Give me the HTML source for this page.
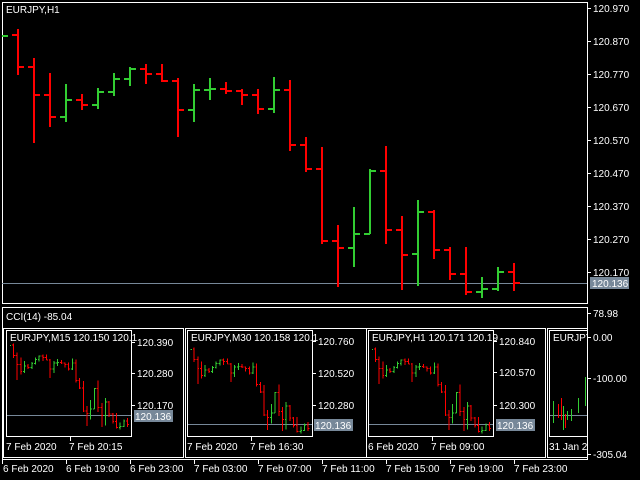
<!DOCTYPE html>
<html><head><meta charset="utf-8"><style>
html,body{margin:0;padding:0;background:#000;width:640px;height:480px;overflow:hidden}
svg{display:block}
text{font-family:"Liberation Sans",sans-serif;font-size:10px;fill:#fff}
</style></head><body>
<svg width="640" height="480" viewBox="0 0 640 480" shape-rendering="crispEdges">
<defs>
<g id="bars" fill="none">
<path stroke="#ff0000" vector-effect="non-scaling-stroke" d="M18 29V75M12 35H18M18 67H24M34 58V143M28 67H34M34 95H40M50 73V127M44 95H50M50 117H56M82 94V110M76 100H82M82 105H88M146 64V84M140 69H146M146 74H152M162 64V82M156 74H162M162 81H168M178 78V137M172 81H178M178 110H184M226 82V94M220 89H226M226 91H232M242 89V105M236 91H242M242 95H248M258 89V114M252 95H258M258 109H264M290 80V151M284 90H290M290 145H296M306 137V172M300 145H306M306 169H312M322 147V244M316 169H322M322 241H328M338 225V287M332 241H338M338 248H344M386 146V244M380 171H386M386 230H392M402 216V290M396 230H402M402 255H408M434 210V259M428 212H434M434 250H440M450 247V280M444 250H450M450 274H456M466 247V295M460 274H466M466 292H472M514 263V291M508 272H514M514 283H520"/>
<path stroke="#32cd32" vector-effect="non-scaling-stroke" d="M2 36H8M66 84V122M60 117H66M66 100H72M98 88V109M92 105H98M98 92H104M114 73V96M108 92H114M114 79H120M130 67V86M124 79H130M130 69H136M194 84V122M188 110H194M194 90H200M210 78V100M204 90H210M210 89H216M274 77V113M268 109H274M274 90H280M354 207V267M348 248H354M354 234H360M370 169V234M364 234H370M370 171H376M418 200V286M412 254H418M418 212H424M482 277V298M476 292H482M482 289H488M498 267V291M492 289H498M498 272H504"/>
</g>
<clipPath id="c1"><rect x="7" y="331" width="124" height="105"/></clipPath>
<clipPath id="c2"><rect x="188" y="331" width="123" height="105"/></clipPath>
<clipPath id="c3"><rect x="369" y="331" width="123" height="105"/></clipPath>
<clipPath id="c4"><rect x="550" y="331" width="37" height="105"/></clipPath>
</defs>

<!-- main chart -->
<rect x="2.5" y="2.5" width="585" height="301" fill="none" stroke="#fff"/>
<line x1="2" y1="283.5" x2="587" y2="283.5" stroke="#778899"/>
<g stroke-width="2"><use href="#bars"/></g>
<text x="6" y="13">EURJPY,H1</text>
<g stroke="#fff">
<path d="M587 8.5H591M587 41.5H591M587 74.5H591M587 107.5H591M587 140.5H591M587 173.5H591M587 206.5H591M587 239.5H591M587 272.5H591"/>
</g>
<g>
<text x="593" y="12">120.970</text><text x="593" y="45">120.870</text><text x="593" y="78">120.770</text><text x="593" y="111">120.670</text><text x="593" y="144">120.570</text><text x="593" y="177">120.470</text><text x="593" y="210">120.370</text><text x="593" y="243">120.270</text><text x="593" y="276">120.170</text>
</g>
<rect x="590" y="277" width="39" height="12" fill="#778899"/>
<text x="592" y="287">120.136</text>

<!-- indicator window -->
<rect x="2.5" y="307.5" width="585" height="152" fill="none" stroke="#fff"/>
<text x="6" y="320">CCI(14) -85.04</text>

<!-- mini 1 -->
<rect x="3.5" y="328.5" width="180" height="129" fill="none" stroke="#fff"/>
<rect x="6.5" y="330.5" width="125" height="106" fill="none" stroke="#fff"/>
<line x1="7" y1="415.5" x2="131" y2="415.5" stroke="#778899"/>
<g clip-path="url(#c1)" stroke-width="1"><use href="#bars" transform="translate(9.3 334) scale(0.23 0.32)"/></g>
<text x="10" y="341">EURJPY,M15  120.150 120.1</text>
<path stroke="#fff" d="M131 342.5H135M131 373.5H135M131 405.5H135M70.5 437V441"/>
<text x="137" y="346">120.390</text><text x="137" y="377">120.280</text><text x="137" y="409">120.170</text>
<rect x="134" y="410" width="39" height="12" fill="#778899"/><text x="135" y="420">120.136</text>
<text x="6" y="450">7 Feb 2020</text><text x="69" y="450">7 Feb 20:15</text>

<!-- mini 2 -->
<rect x="185.5" y="328.5" width="181" height="129" fill="none" stroke="#fff"/>
<rect x="187.5" y="330.5" width="125" height="106" fill="none" stroke="#fff"/>
<line x1="188" y1="424.5" x2="312" y2="424.5" stroke="#778899"/>
<g clip-path="url(#c2)" stroke-width="1"><use href="#bars" transform="translate(190 338) scale(0.23 0.32)"/></g>
<text x="191" y="341">EURJPY,M30  120.158 120.1</text>
<path stroke="#fff" d="M312 341.5H316M312 373.5H316M312 405.5H316M251.5 437V441"/>
<text x="318" y="345">120.760</text><text x="318" y="377">120.520</text><text x="318" y="409">120.280</text>
<rect x="314" y="419" width="39" height="12" fill="#778899"/><text x="315" y="429">120.136</text>
<text x="187" y="450">7 Feb 2020</text><text x="250" y="450">7 Feb 16:30</text>

<!-- mini 3 -->
<rect x="366.5" y="328.5" width="179" height="129" fill="none" stroke="#fff"/>
<rect x="368.5" y="330.5" width="125" height="106" fill="none" stroke="#fff"/>
<line x1="369" y1="424.5" x2="493" y2="424.5" stroke="#778899"/>
<g clip-path="url(#c3)" stroke-width="1"><use href="#bars" transform="translate(371.3 338) scale(0.23 0.32)"/></g>
<text x="372" y="341">EURJPY,H1  120.171 120.19</text>
<path stroke="#fff" d="M493 341.5H497M493 372.5H497M493 405.5H497M432.5 437V441"/>
<text x="499" y="345">120.840</text><text x="499" y="376">120.570</text><text x="499" y="409">120.300</text>
<rect x="496" y="419" width="39" height="12" fill="#778899"/><text x="497" y="429">120.136</text>
<text x="368" y="450">6 Feb 2020</text><text x="431" y="450">7 Feb 09:00</text>

<!-- mini 4 -->
<rect x="547.5" y="328.5" width="50" height="129" fill="none" stroke="#fff"/>
<rect x="549.5" y="330.5" width="50" height="106" fill="none" stroke="#fff"/>
<line x1="550" y1="415.5" x2="587" y2="415.5" stroke="#778899"/>
<g clip-path="url(#c4)" fill="none">
<path stroke="#32cd32" d="M553.5 401V423M563.5 406V430M567.5 411V420M571.5 409V421M578.5 398V413M585.5 377V406"/>
<path stroke="#ff0000" d="M558.5 404V418M561.5 398V420M565.5 414V428"/>
</g>
<text x="553" y="341">EURJPY</text>
<text x="549" y="450">31 Jan 20</text>
<rect x="588" y="328" width="52" height="131" fill="#000"/>
<line x1="587.5" y1="307" x2="587.5" y2="460" stroke="#fff"/>
<path stroke="#fff" d="M587 313.5H591M587 337.5H591M587 378.5H591M587 454.5H591"/>
<text x="593" y="317">78.98</text><text x="593" y="341">0.00</text><text x="593" y="382">-100.00</text><text x="593" y="458">-305.04</text>

<!-- time axis -->
<path stroke="#fff" d="M2.5 459V464M66.5 459V464M130.5 459V464M194.5 459V464M258.5 459V464M322.5 459V464M386.5 459V464M450.5 459V464M514.5 459V464"/>
<text x="3" y="472">6 Feb 2020</text><text x="66" y="472">6 Feb 19:00</text><text x="130" y="472">6 Feb 23:00</text><text x="194" y="472">7 Feb 03:00</text><text x="258" y="472">7 Feb 07:00</text><text x="322" y="472">7 Feb 11:00</text><text x="386" y="472">7 Feb 15:00</text><text x="450" y="472">7 Feb 19:00</text><text x="514" y="472">7 Feb 23:00</text>
</svg>
</body></html>
